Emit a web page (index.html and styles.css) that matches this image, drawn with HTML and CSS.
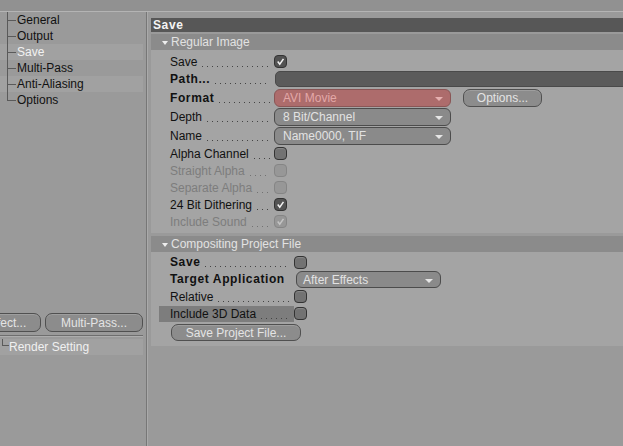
FILE: index.html
```html
<!DOCTYPE html>
<html>
<head>
<meta charset="utf-8">
<link rel="stylesheet" href="styles.css">
</head>
<body>
<div class="app">
  <div class="topbar"></div>
  <div class="main">
    <aside class="left">
      <ul class="tree">
        <li>General</li>
        <li>Output</li>
        <li class="sel stripe">Save</li>
        <li>Multi-Pass</li>
        <li class="stripe">Anti-Aliasing</li>
        <li class="last">Options</li>
      </ul>
      <div class="btnrow">
        <div class="btn effect">Effect...</div>
        <div class="btn multi">Multi-Pass...</div>
      </div>
      <div class="sep"></div>
      <div class="render-row"><span class="stub"></span>Render Setting</div>
    </aside>
    <div class="divider"></div>
    <section class="right">
      <div class="title">Save</div>

      <div class="ghead"><span class="tri"></span>Regular Image</div>
      <div class="gbody g1">
        <div class="row r17">
          <span class="lbl"><span class="t">Save</span><span class="dots"></span></span>
          <span class="cb on"><svg viewBox="0 0 13 13"><path d="M3.2 6.6 L5.6 9.6 L10 3.4" /></svg></span>
        </div>
        <div class="row r18">
          <span class="lbl"><span class="t b">Path...</span><span class="dots"></span></span>
          <span class="field"></span>
        </div>
        <div class="row r19">
          <span class="lbl"><span class="t b">Format</span><span class="dots"></span></span>
          <span class="dd red">AVI Movie<span class="arr"></span></span>
          <span class="btn opts">Options...</span>
        </div>
        <div class="row r19">
          <span class="lbl"><span class="t">Depth</span><span class="dots"></span></span>
          <span class="dd">8 Bit/Channel<span class="arr"></span></span>
        </div>
        <div class="row r19">
          <span class="lbl"><span class="t">Name</span><span class="dots"></span></span>
          <span class="dd">Name0000, TIF<span class="arr"></span></span>
        </div>
        <div class="row r17">
          <span class="lbl"><span class="t">Alpha Channel</span><span class="dots"></span></span>
          <span class="cb"></span>
        </div>
        <div class="row r17 dis">
          <span class="lbl"><span class="t">Straight Alpha</span><span class="dots"></span></span>
          <span class="cb"></span>
        </div>
        <div class="row r17 dis">
          <span class="lbl"><span class="t">Separate Alpha</span><span class="dots"></span></span>
          <span class="cb"></span>
        </div>
        <div class="row r17">
          <span class="lbl"><span class="t">24 Bit Dithering</span><span class="dots"></span></span>
          <span class="cb on"><svg viewBox="0 0 13 13"><path d="M3.2 6.6 L5.6 9.6 L10 3.4" /></svg></span>
        </div>
        <div class="row r17 dis">
          <span class="lbl"><span class="t">Include Sound</span><span class="dots"></span></span>
          <span class="cb on"><svg viewBox="0 0 13 13"><path d="M3.2 6.6 L5.6 9.6 L10 3.4" /></svg></span>
        </div>
      </div>

      <div class="ghead g2h"><span class="tri"></span>Compositing Project File</div>
      <div class="gbody g2">
        <div class="row r16">
          <span class="lbl wide"><span class="t b">Save</span><span class="dots"></span></span>
          <span class="cb"></span>
        </div>
        <div class="row r18">
          <span class="lbl wide"><span class="t b">Target Application</span></span>
          <span class="dd target">After Effects<span class="arr"></span></span>
        </div>
        <div class="row r17">
          <span class="lbl wide"><span class="t">Relative</span><span class="dots"></span></span>
          <span class="cb"></span>
        </div>
        <div class="row r17 hl">
          <span class="lbl wide"><span class="t">Include 3D Data</span><span class="dots"></span></span>
          <span class="cb"></span>
        </div>
        <div class="btnline">
          <span class="btn spf">Save Project File...</span>
        </div>
      </div>
    </section>
  </div>
</div>
</body>
</html>
```

FILE: styles.css
```css
* { box-sizing: border-box; }
html, body { margin: 0; padding: 0; }
body {
  background: #9a9a9a;
  font-family: "Liberation Sans", Arial, sans-serif;
  font-size: 12px;
  color: #111;
}
.app {
  width: 623px;
  height: 446px;
  overflow: hidden;
  display: flex;
  flex-direction: column;
}
.topbar {
  flex: none;
  height: 12px;
  background: #919191;
  border-bottom: 1px solid #b4b4b4;
}
.main {
  flex: 1;
  display: flex;
  min-height: 0;
}

/* left tree panel */
.left {
  width: 146px;
  flex: none;
  padding-right: 3px;
  display: flex;
  flex-direction: column;
}
.tree {
  list-style: none;
  margin: 0;
  padding: 0;
}
.tree li {
  position: relative;
  height: 16px;
  line-height: 16px;
  padding-left: 17px;
  color: #111;
}
.tree li::before {
  content: "";
  position: absolute;
  left: 7px;
  top: 0;
  bottom: 0;
  border-left: 1px solid #5a5a5a;
}
.tree li.last::before { bottom: 8px; }
.tree li::after {
  content: "";
  position: absolute;
  left: 7px;
  top: 8px;
  width: 9px;
  border-top: 1px solid #5a5a5a;
}
.tree li.stripe { background: #a1a1a1; }
.tree li.sel { color: #f2f2f2; }

.btnrow {
  margin-top: 205px;
  display: flex;
  gap: 4px;
  height: 19px;
}
.btn {
  display: flex;
  align-items: center;
  justify-content: center;
  background: #8c8c8c;
  border: 1px solid #505050;
  border-radius: 7px;
  color: #e4e4e4;
  box-shadow: inset 0 1px 0 #9e9e9e;
  white-space: nowrap;
}
.effect { width: 70px; margin-left: -29px; }
.multi { width: 98px; }
.sep {
  margin-top: 3px;
  height: 2px;
  border-top: 1px solid #6e6e6e;
  border-bottom: 1px solid #adadad;
}
.render-row {
  margin-top: 2px;
  height: 16px;
  line-height: 16px;
  background: #a1a1a1;
  color: #f0f0f0;
  display: flex;
  align-items: flex-start;
}
.stub {
  width: 7px;
  height: 7px;
  margin-left: 2px;
  border-left: 1px solid #5a5a5a;
  border-bottom: 1px solid #5a5a5a;
}

.divider {
  flex: none;
  width: 2px;
  border-left: 1px solid #777;
  background: #aaaaaa;
}

/* right panel */
.right {
  flex: 1;
  min-width: 0;
  overflow: hidden;
  padding: 6px 0 0 3px;
}
.title {
  height: 14px;
  line-height: 14px;
  background: #575757;
  color: #f4f4f4;
  font-weight: bold;
  letter-spacing: 0.6px;
  padding-left: 2px;
}
.ghead {
  margin-top: 2px;
  height: 16px;
  background: #8b8b8b;
  color: #e2e2e2;
  display: flex;
  align-items: center;
  padding-left: 11px;
}
.g2h { margin-top: 3px; }
.tri {
  width: 0;
  height: 0;
  border-left: 3px solid transparent;
  border-right: 3px solid transparent;
  border-top: 4px solid #eeeeee;
  margin-right: 3px;
  margin-top: 1px;
}
.gbody { background: #a4a4a4; }
.g1 { padding: 3px 0 3px; }
.g2 { padding: 2px 0 4px; }

.row {
  display: flex;
  align-items: center;
  padding-left: 8px;
}
.r16 { height: 16px; }
.r17 { height: 17px; }
.r18 { height: 18px; }
.r19 { height: 19px; }

.lbl {
  width: 115px;
  height: 16px;
  padding-left: 11px;
  display: flex;
  align-items: center;
  white-space: nowrap;
}
.lbl.wide { width: 135px; }
.t.b { font-weight: bold; letter-spacing: 0.6px; }
.dots {
  flex: 1;
  align-self: flex-end;
  height: 1px;
  margin: 0 4px 3px 5px;
  background-image: linear-gradient(90deg, #444 1px, transparent 1px);
  background-size: 5px 1px;
  background-repeat: repeat-x;
}
.dis .t { color: #7d7d7d; }
.dis .dots {
  background-image: linear-gradient(90deg, #727272 1px, transparent 1px);
}
.hl .lbl { background: #7d7d7d; }

.cb {
  width: 13px;
  height: 13px;
  border: 1px solid #333;
  border-radius: 4px;
  background: #727272;
  box-shadow: inset 0 1px 1px #8a8a8a;
  display: flex;
}
.cb.on { background: #535353; box-shadow: none; }
.cb svg { width: 11px; height: 11px; }
.cb path { fill: none; stroke: #f2f2f2; stroke-width: 1.8; }
.dis .cb { border-color: #858585; background: #979797; box-shadow: none; }
.dis .cb path { stroke: #c4c4c4; }

.field {
  flex: 1;
  height: 16px;
  margin-left: 1px;
  margin-right: -10px;
  background: #5b5b5b;
  border: 1px solid #4a4a4a;
  border-radius: 5px;
}

.dd {
  position: relative;
  width: 177px;
  height: 18px;
  line-height: 16px;
  padding-left: 8px;
  background: #8a8a8a;
  border: 1px solid #4c4c4c;
  border-radius: 6px;
  color: #e2e2e2;
  white-space: nowrap;
}
.dd.red {
  background: #ad6c6c;
  border-color: #8a5656;
  color: #e3a8a8;
}
.arr {
  position: absolute;
  right: 7px;
  top: 7px;
  width: 0;
  height: 0;
  border-left: 4px solid transparent;
  border-right: 4px solid transparent;
  border-top: 4px solid #e6e6e6;
}
.red .arr { border-top-color: #e6b0b0; }
.dd.target { width: 145px; height: 17px; margin-left: 2px; padding-left: 6px; }

.opts {
  width: 79px;
  height: 18px;
  margin-left: 12px;
}

.btnline {
  height: 20px;
  padding-top: 2px;
  padding-left: 20px;
}
.spf {
  width: 130px;
  height: 17px;
}
```
